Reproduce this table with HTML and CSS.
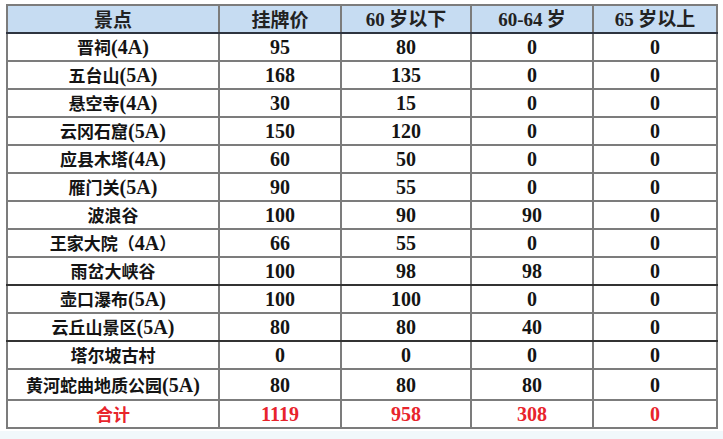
FILE: index.html
```html
<!DOCTYPE html>
<html lang="zh">
<head>
<meta charset="utf-8">
<title>景点门票</title>
<link rel="stylesheet" href="styles.css">
</head>
<body>
<div class="page">
<table class="tbl">
<colgroup>
<col class="c1"><col class="c2"><col class="c3"><col class="c4"><col class="c5">
</colgroup>
<thead>
<tr class="head"><th>景点</th><th>挂牌价</th><th><span class="hn">60</span> 岁以下</th><th><span class="hn">60-64</span> 岁</th><th><span class="hn">65</span> 岁以上</th></tr>
</thead>
<tbody>
<tr><td><span class="zh">晋祠</span>(4A)</td><td>95</td><td>80</td><td>0</td><td>0</td></tr>
<tr><td><span class="zh">五台山</span>(5A)</td><td>168</td><td>135</td><td>0</td><td>0</td></tr>
<tr><td><span class="zh">悬空寺</span>(4A)</td><td>30</td><td>15</td><td>0</td><td>0</td></tr>
<tr><td><span class="zh">云冈石窟</span>(5A)</td><td>150</td><td>120</td><td>0</td><td>0</td></tr>
<tr><td><span class="zh">应县木塔</span>(4A)</td><td>60</td><td>50</td><td>0</td><td>0</td></tr>
<tr><td><span class="zh">雁门关</span>(5A)</td><td>90</td><td>55</td><td>0</td><td>0</td></tr>
<tr><td><span class="zh">波浪谷</span></td><td>100</td><td>90</td><td>90</td><td>0</td></tr>
<tr><td><span class="zh">王家大院（</span>4A<span class="zh">）</span></td><td>66</td><td>55</td><td>0</td><td>0</td></tr>
<tr class="dark"><td><span class="zh">雨岔大峡谷</span></td><td>100</td><td>98</td><td>98</td><td>0</td></tr>
<tr><td><span class="zh">壶口瀑布</span>(5A)</td><td>100</td><td>100</td><td>0</td><td>0</td></tr>
<tr class="dark"><td><span class="zh">云丘山景区</span>(5A)</td><td>80</td><td>80</td><td>40</td><td>0</td></tr>
<tr><td><span class="zh">塔尔坡古村</span></td><td>0</td><td>0</td><td>0</td><td>0</td></tr>
<tr class="tall"><td><span class="zh">黄河蛇曲地质公园</span>(5A)</td><td>80</td><td>80</td><td>80</td><td>0</td></tr>
<tr class="total"><td><span class="zh">合计</span></td><td>1119</td><td>958</td><td>308</td><td>0</td></tr>
</tbody>
</table>
<div class="tint"></div>
</div>
</body>
</html>
```
FILE: styles.css
```css
html, body {
  margin: 0;
  padding: 0;
  background: #ffffff;
}
.page {
  width: 723px;
  height: 439px;
  display: flex;
  flex-direction: column;
  overflow: hidden;
}
.tbl {
  margin: 4px 0 0 6px;
  border-collapse: collapse;
  table-layout: fixed;
  width: 710px;
  font-family: "Liberation Serif", "Noto Sans CJK SC", serif;
  font-weight: bold;
  font-size: 20px;
  color: #141414;
}
.c1 { width: 212px; }
.c2 { width: 122px; }
.c3 { width: 130px; }
.c4 { width: 122px; }
.c5 { width: 124px; }
.tbl th, .tbl td {
  border: 2px solid #7c7c7c;
  height: 26px;
  padding: 0;
  text-align: center;
  vertical-align: middle;
  line-height: 24px;
}
.zh {
  font-family: "Noto Sans CJK SC", sans-serif;
  font-size: 17px;
}
.head th {
  background: #c6dcf2;
  border-bottom-color: #2e3440;
  color: #222;
  font-family: "Noto Sans CJK SC", sans-serif;
  font-size: 19px;
}
.hn {
  font-family: "Liberation Serif", serif;
  font-size: 19px;
}
.dark td {
  border-bottom-color: #333333;
}
.tall td {
  height: 29px;
}
.total td {
  color: #e8242c;
}
.tint {
  flex: 1;
  margin-top: 2px;
  background: #f1f8fb;
}
```
